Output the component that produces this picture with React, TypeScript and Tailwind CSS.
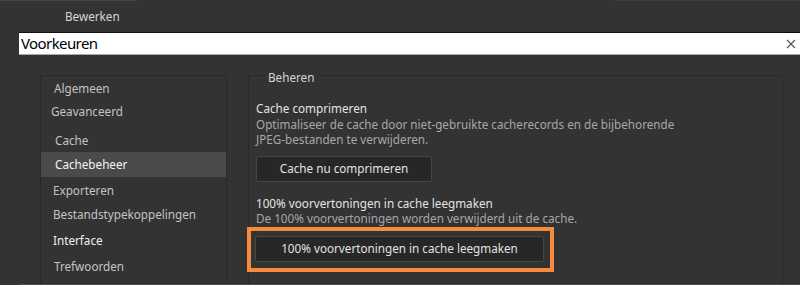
import React from "react";

const menu = [
  { label: "Algemeen", h: "h-[24px] mt-[1px]", pl: "pl-[13px]" },
  { label: "Geavanceerd", h: "h-[22px]", pl: "pl-[10px]" },
  { label: "Cache", h: "h-[23px] mt-[6px]", pl: "pl-[14px]" },
  { label: "Cachebeheer", h: "h-[25px]", pl: "pl-[14px]", active: true },
  { label: "Exporteren", h: "h-[27px]", pl: "pl-[12px]" },
  { label: "Bestandstypekoppelingen", h: "h-[21px]", pl: "pl-[12px]" },
  { label: "Interface", h: "h-[31px]", pl: "pl-[12px]", strong: true },
  { label: "Trefwoorden", h: "h-[22px]", pl: "pl-[13px]" },
];

const App: React.FC = () => {
  return (
    <div className="w-[800px] h-[285px] overflow-hidden bg-[#333333] font-['Noto_Sans','Open_Sans',sans-serif] text-[11.7px] flex flex-col">
      {/* top edge */}
      <div className="h-[1px] flex">
        <div className="w-[137px] bg-[#444444]" />
        <div className="flex-1" />
        <div className="w-[187px] bg-[#3c3c3c]" />
      </div>

      {/* menu bar */}
      <div className="h-[31px] flex items-center pl-[65px] text-[#d6d6d6]">Bewerken</div>

      {/* title bar */}
      <div className="ml-[19px] h-[23px] bg-white border-t border-[#111] border-b border-b-[#a8a8a8] flex items-center justify-between">
        <span className="pl-[2px] text-[15px] tracking-[-0.6px] text-black leading-none">Voorkeuren</span>
        <svg width="10" height="10" viewBox="0 0 10 10" className="mr-[4px]">
          <path d="M1 1 L9 9 M9 1 L1 9" stroke="#555" strokeWidth="1.1" />
        </svg>
      </div>

      {/* body */}
      <div className="flex-1 ml-[19px] border-b border-[#4e4e4e] flex pl-[21px] pt-[20px] overflow-hidden">
        {/* left nav */}
        <div className="w-[187px] h-[240px] border border-[#292929] flex flex-col">
          {menu.map((m) => (
            <div
              key={m.label}
              className={`${m.h} ${m.pl} flex items-center shrink-0 ${
                m.active ? "bg-[#4a4a4a] text-[#f4f4f4]" : m.strong ? "text-[#f0f0f0]" : "text-[#c4c4c4]"
              }`}
            >
              {m.label}
            </div>
          ))}
        </div>

        {/* right group */}
        <fieldset className="ml-[21px] w-[535px] h-[240px] border border-[#292929] -mt-[10px] pl-[7px]">
          <legend className="ml-[9px] px-[3px] pt-[4px] text-[#d6d6d6] leading-[16px]">Beheren</legend>

          <div className="mt-[15px] text-[#e4e4e4] leading-[16px]">Cache comprimeren</div>
          <div className="text-[#a4a8ae] leading-[15px] mt-[1px]">
            Optimaliseer de cache door niet-gebruikte cacherecords en de bijbehorende
            <br />
            JPEG-bestanden te verwijderen.
          </div>
          <button className="mt-[9px] w-[176px] h-[26px] bg-[#272727] border border-[#474747] rounded-[2px] text-[#e2e2e2] flex items-center justify-center">
            Cache nu comprimeren
          </button>

          <div className="mt-[13px] text-[#e4e4e4] leading-[16px]">100% voorvertoningen in cache leegmaken</div>
          <div className="text-[#a4a8ae] leading-[15px]">De 100% voorvertoningen worden verwijderd uit de cache.</div>

          <div className="mt-[1px] -ml-[9px] w-[307px] h-[45px] border-4 border-[#f68b3d] pl-[4px] pt-[5px]">
            <button className="w-[289px] h-[26px] bg-[#272727] border border-[#474747] rounded-[2px] text-[#e2e2e2] flex items-center justify-center">
              100% voorvertoningen in cache leegmaken
            </button>
          </div>
        </fieldset>
      </div>
    </div>
  );
};

export default App;
